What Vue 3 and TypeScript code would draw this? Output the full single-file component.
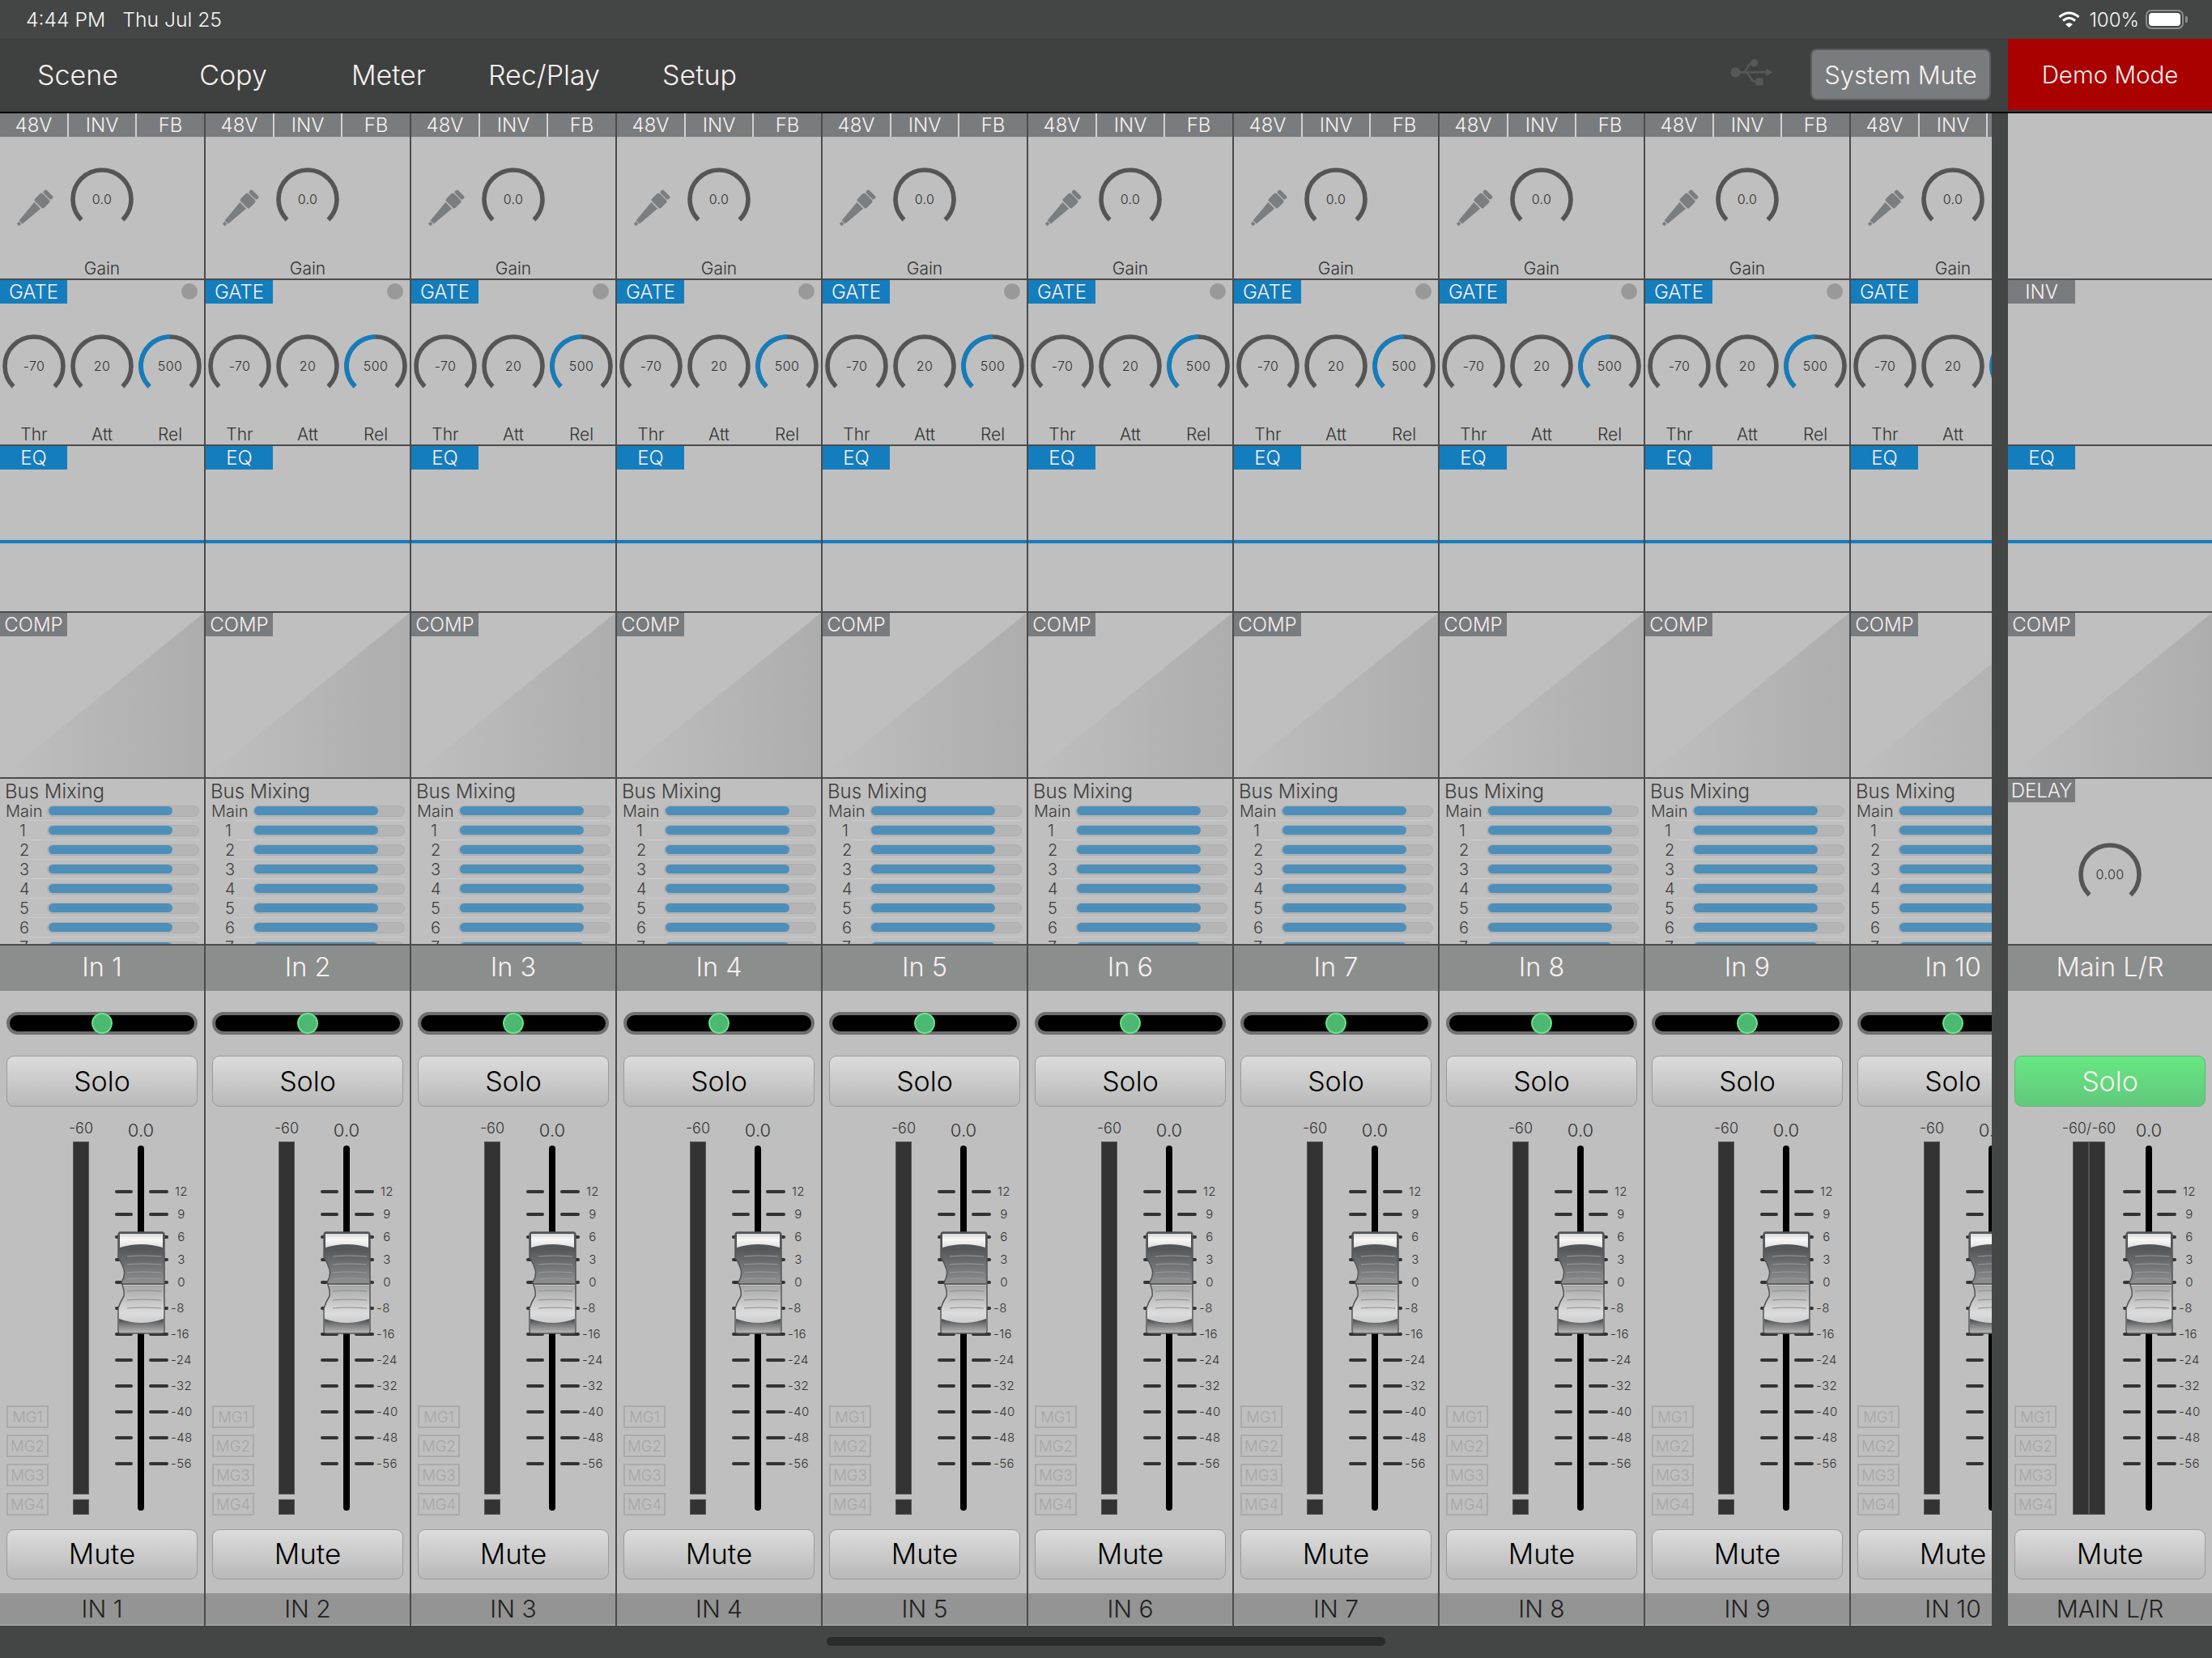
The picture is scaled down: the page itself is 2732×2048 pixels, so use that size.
<script setup lang="ts">
interface Channel {
  name: string
  label: string
  main: boolean
}
interface Group {
  cls: string
  channels: Channel[]
}
interface Knob {
  value: string
  label: string
  blue: boolean
}

const groups: Group[] = [
  {
    cls: 'inputs',
    channels: Array.from({ length: 10 }, (_, i) => ({
      name: `In ${i + 1}`,
      label: `IN ${i + 1}`,
      main: false,
    })),
  },
  { cls: 'master', channels: [{ name: 'Main L/R', label: 'MAIN L/R', main: true }] },
]

const navItems = ['Scene', 'Copy', 'Meter', 'Rec/Play', 'Setup']
const toggles = ['48V', 'INV', 'FB']
const gateKnobs: Knob[] = [
  { value: '-70', label: 'Thr', blue: false },
  { value: '20', label: 'Att', blue: false },
  { value: '500', label: 'Rel', blue: true },
]
const busRows = ['Main', '1', '2', '3', '4', '5', '6', '7']
const groupsMg = ['MG1', 'MG2', 'MG3', 'MG4']

const ticks: { text: string; y: number }[] = [
  { text: '12', y: 57 },
  { text: '9', y: 85.1 },
  { text: '6', y: 113.2 },
  { text: '3', y: 141.3 },
  { text: '0', y: 169.4 },
  { text: '-8', y: 201.2 },
  { text: '-16', y: 233 },
  { text: '-24', y: 265.3 },
  { text: '-32', y: 297.1 },
  { text: '-40', y: 329.3 },
  { text: '-48', y: 361.1 },
  { text: '-56', y: 393.4 },
]
const ridges = [30, 40, 50, 58, 73, 84, 94]
</script>

<template>
  <div class="app">
    <svg class="defs" width="0" height="0" aria-hidden="true">
      <defs>
        <linearGradient id="capBody" x1="0" y1="0" x2="0" y2="1">
          <stop offset="0" stop-color="#4f5255" />
          <stop offset="0.17" stop-color="#55585b" />
          <stop offset="0.5" stop-color="#8d8e8f" />
          <stop offset="0.515" stop-color="#a5a5a5" />
          <stop offset="0.8" stop-color="#dcdcdc" />
          <stop offset="1" stop-color="#bdbdbd" />
        </linearGradient>
        <linearGradient id="capTop" x1="0" y1="0" x2="0" y2="1">
          <stop offset="0" stop-color="#d6d6d6" />
          <stop offset="0.4" stop-color="#f8f8f8" />
          <stop offset="1" stop-color="#dedede" />
        </linearGradient>
        <linearGradient id="capLow" x1="0" y1="0" x2="0" y2="1">
          <stop offset="0" stop-color="#464849" />
          <stop offset="0.45" stop-color="#7c7e7f" />
          <stop offset="1" stop-color="#b4b4b4" />
        </linearGradient>
      </defs>
    </svg>

    <header class="status">
      <div class="status-left">
        <span>4:44 PM</span>
        <span>Thu Jul 25</span>
      </div>
      <div class="status-right">
        <svg class="wifi" viewBox="0 0 27 20" width="27" height="20">
          <path d="M1.5 7 Q13.5 -3 25.5 7" fill="none" stroke="#fff" stroke-width="3" />
          <path d="M6 11.5 Q13.5 5 21 11.5" fill="none" stroke="#fff" stroke-width="3" />
          <path d="M9 16 L13.5 20 L18 16 Q13.5 12.5 9 16 Z" fill="#fff" />
        </svg>
        <span class="pct">100%</span>
        <div class="battery"><div class="battery-fill"></div></div>
        <div class="battery-nub"></div>
      </div>
    </header>

    <nav class="toolbar">
      <div class="nav-item" v-for="item in navItems" :key="item">{{ item }}</div>
      <svg class="usb" viewBox="0 0 60 40" width="60" height="40">
        <g fill="#565857" stroke="none">
          <circle cx="8.5" cy="20.3" r="6.2" />
          <circle cx="31.7" cy="8.7" r="4.6" />
          <rect x="33.5" y="27.5" width="9" height="9" />
          <path d="M54.5 20.3 L46 15.5 V25 Z" />
        </g>
        <path
          d="M8.5 20.3 H47 M16 20.3 H18 Q21 20 24 13 Q25.5 9 31 8.7 M20 20.3 Q24 21 27 27 Q29 32 35 32"
          fill="none"
          stroke="#565857"
          stroke-width="2.4"
        />
      </svg>
      <button class="sys-mute">System Mute</button>
      <div class="demo">Demo Mode</div>
    </nav>

    <main class="board">
      <div v-for="group in groups" :key="group.cls" :class="group.cls">
        <section v-for="ch in group.channels" :key="ch.name" class="channel">
          <!-- input toggles and gain -->
          <div class="sec gain">
            <template v-if="!ch.main">
              <div class="toggles">
                <div class="tag-cell" v-for="t in toggles" :key="t">{{ t }}</div>
              </div>
              <div class="knob-row gain-row">
                <div class="knob-col">
                  <svg class="mic" viewBox="0 0 44 44" width="44" height="44">
                    <g transform="rotate(45 22 22)" fill="#7b7e80">
                      <rect x="15" y="-5.5" width="14" height="5.5" rx="2.2" />
                      <rect x="14" y="1" width="16" height="13.5" rx="2.5" />
                      <path d="M16.5 16 H27.5 L25 45 H19 Z" />
                      <rect x="20" y="46" width="4" height="4" />
                    </g>
                  </svg>
                </div>
                <div class="knob-col">
                  <svg class="knob" viewBox="0 0 84 84" width="84" height="84">
                    <path class="arc" d="M16.54 67.46 A36 36 0 1 1 67.46 67.46" />
                    <text x="42" y="47.5" class="knob-text">0.0</text>
                  </svg>
                  <div class="knob-label gain-label">Gain</div>
                </div>
              </div>
            </template>
          </div>

          <!-- gate -->
          <div class="sec gate">
            <template v-if="!ch.main">
              <div class="tag blue">GATE</div>
              <div class="gate-dot"></div>
              <div class="knob-row gate-row">
                <div class="knob-col" v-for="k in gateKnobs" :key="k.label">
                  <svg class="knob" viewBox="0 0 84 84" width="84" height="84">
                    <path class="arc" d="M16.54 67.46 A36 36 0 1 1 67.46 67.46" />
                    <path v-if="k.blue" class="arc arc-blue" d="M16.54 67.46 A36 36 0 0 1 42 6" />
                    <text x="42" y="47.5" class="knob-text">{{ k.value }}</text>
                  </svg>
                  <div class="knob-label gate-label">{{ k.label }}</div>
                </div>
              </div>
            </template>
            <div v-else class="tag grey">INV</div>
          </div>

          <!-- eq -->
          <div class="sec eq">
            <div class="tag blue">EQ</div>
            <div class="eq-line"></div>
          </div>

          <!-- comp -->
          <div class="sec comp">
            <div class="comp-curve"></div>
            <div class="tag grey comp-tag">COMP</div>
          </div>

          <!-- bus mixing / delay -->
          <div class="sec bus">
            <template v-if="!ch.main">
              <div class="bus-title">Bus Mixing</div>
              <div v-for="r in busRows" :key="r" class="bus-row">
                <span class="bus-name" :class="{ 'bus-main': r === 'Main' }">{{ r }}</span>
                <div class="bus-track"><div class="bus-fill"></div></div>
              </div>
            </template>
            <template v-else>
              <div class="tag grey">DELAY</div>
              <div class="delay-knob">
                <svg class="knob" viewBox="0 0 84 84" width="84" height="84">
                  <path class="arc" d="M16.54 67.46 A36 36 0 1 1 67.46 67.46" />
                  <text x="42" y="47.5" class="knob-text">0.00</text>
                </svg>
              </div>
            </template>
          </div>

          <div class="name">{{ ch.name }}</div>

          <div class="controls">
            <div class="pan" :class="{ 'pan-empty': ch.main }">
              <div v-if="!ch.main" class="pan-knob"></div>
            </div>
            <button class="btn solo" :class="{ 'solo-on': ch.main }">Solo</button>

            <div class="strip">
              <div class="mg-col">
                <div class="mg" v-for="m in groupsMg" :key="m">{{ m }}</div>
              </div>
              <div class="meter-col">
                <div class="meter-label">{{ ch.main ? '-60/-60' : '-60' }}</div>
                <div class="meters">
                  <div class="meter" v-for="n in ch.main ? 2 : 1" :key="n">
                    <div class="meter-top"></div>
                    <div v-if="!ch.main" class="meter-low"></div>
                  </div>
                </div>
              </div>
              <div class="fader-col">
                <div class="fader-value">0.0</div>
                <div class="fader">
                  <div class="track"></div>
                  <div
                    v-for="t in ticks"
                    :key="t.text"
                    class="tick"
                    :style="{ top: t.y - 12 + 'px' }"
                  >
                    <i class="dash dash-l"></i>
                    <i class="dash dash-r"></i>
                    <span class="tick-text" :class="{ neg: t.text.startsWith('-') }">{{ t.text }}</span>
                  </div>
                  <svg class="cap" viewBox="0 0 59 127" width="59" height="127">
                    <path
                      d="M4 1 H55 Q58 1 58 5 V122 Q58 126 55 126 H4 Q1 126 1 122 V95 Q3 88 8 80 Q9 74 6 66 L5 63 Q10 55 8 47 Q6 40 1 32 V5 Q1 1 4 1 Z"
                      fill="url(#capBody)"
                      stroke="#555"
                      stroke-width="1.5"
                    />
                    <path d="M3 3 H56 V20 Q29.5 12 3 20 Z" fill="url(#capTop)" />
                    <path
                      v-for="y in ridges"
                      :key="y"
                      :d="`M12 ${y + 1} Q29.5 ${y - 1} 54 ${y + 1}`"
                      fill="none"
                      :stroke="y > 62 ? '#8b8c8d' : '#9a9b9c'"
                      stroke-width="1"
                    />
                    <path d="M6 65 H57" stroke="#4b4c4d" stroke-width="1.6" />
                    <path d="M7 66.5 H57" stroke="#d0d0d0" stroke-width="0.8" />
                    <path d="M2 108 Q29.5 118 57 108 V125 H2 Z" fill="url(#capLow)" />
                  </svg>
                </div>
              </div>
            </div>

            <button class="btn mute">Mute</button>
          </div>

          <div class="ch-label">{{ ch.label }}</div>
        </section>
      </div>
    </main>

    <footer class="home">
      <div class="home-bar"></div>
    </footer>
  </div>
</template>

<style>
html,
body {
  margin: 0;
  background: #444645;
}
</style>

<style scoped>
.app {
  width: 2732px;
  height: 2048px;
  overflow: hidden;
  display: flex;
  flex-direction: column;
  background: #444645;
  font-family: Inter, 'Liberation Sans', sans-serif;
  color: #333;
}
.defs {
  position: absolute;
}

/* status bar */
.status {
  height: 48px;
  flex: none;
  display: flex;
  justify-content: space-between;
  align-items: center;
  padding: 0 30px 0 32px;
  color: #f6f6f6;
  font-size: 24.7px;
  font-weight: 300;
  box-sizing: border-box;
}
.status-left {
  display: flex;
  gap: 21px;
}
.status-right {
  display: flex;
  align-items: center;
}
.wifi {
  margin-right: 11px;
}
.pct {
  margin-right: 8px;
  font-size: 24px;
}
.battery {
  width: 47px;
  height: 24px;
  box-sizing: border-box;
  border: 2px solid #8a8c8b;
  border-radius: 7px;
  padding: 2px;
}
.battery-fill {
  height: 100%;
  background: #fff;
  border-radius: 4px;
}
.battery-nub {
  width: 3px;
  height: 8px;
  margin-left: 2px;
  background: #8a8c8b;
  border-radius: 0 2px 2px 0;
}

/* toolbar */
.toolbar {
  height: 92px;
  flex: none;
  box-sizing: border-box;
  display: flex;
  align-items: flex-start;
  background: #3f4140;
  border-bottom: 2px solid #000;
  color: #f8f0f0;
}
.nav-item {
  width: 192px;
  height: 88px;
  display: flex;
  align-items: center;
  justify-content: center;
  font-size: 34px;
  font-weight: 300;
}
.usb {
  margin-left: auto;
  margin-top: 21px;
  margin-right: 41px;
}
.sys-mute {
  width: 223px;
  height: 64px;
  margin-top: 12px;
  box-sizing: border-box;
  background: #797c7e;
  border: 2px solid #5a5c5d;
  border-radius: 8px;
  color: #f8f0f0;
  font-family: inherit;
  font-size: 31px;
  font-weight: 300;
  padding: 0;
}
.demo {
  width: 252px;
  height: 88px;
  margin-left: 21px;
  background: #a90000;
  display: flex;
  align-items: center;
  justify-content: center;
  font-size: 29.5px;
  font-weight: 300;
}

/* board */
.board {
  height: 1868px;
  flex: none;
  display: flex;
}
.inputs {
  width: 2460px;
  overflow: hidden;
  display: flex;
  flex: none;
}
.master {
  margin-left: 20px;
  width: 252px;
  flex: none;
  display: flex;
}
.channel {
  width: 254px;
  flex: none;
  box-sizing: border-box;
  border-right: 2px solid #4b4b4b;
  display: flex;
  flex-direction: column;
  background: #bfbfbf;
}
.master .channel {
  width: 252px;
  border-right: 0;
}
.sec {
  flex: none;
  box-sizing: border-box;
  border-bottom: 2px solid #4b4b4b;
  position: relative;
  overflow: hidden;
}
.gain {
  height: 206px;
}
.gate {
  height: 205px;
}
.eq {
  height: 206px;
}
.comp {
  height: 205px;
}
.bus {
  height: 206px;
}

.toggles {
  display: grid;
  grid-template-columns: 83px 82px 83px;
  column-gap: 2px;
  height: 29px;
  background: #d2d0d0;
}
.tag-cell {
  background: #797c7e;
  color: #f8f0f0;
  font-size: 24px;
  font-weight: 300;
  line-height: 29px;
  text-align: center;
}
.tag {
  width: 83px;
  height: 29px;
  line-height: 29px;
  text-align: center;
  font-size: 24px;
  font-weight: 300;
  color: #f8f0f0;
}
.blue {
  background: #147dbd;
}
.grey {
  background: #797c7e;
}
.gate-dot {
  position: absolute;
  top: 4px;
  right: 8px;
  width: 20px;
  height: 20px;
  border-radius: 50%;
  background: #999;
}

.knob-row {
  display: grid;
  grid-template-columns: repeat(3, 84px);
}
.knob-col {
  display: flex;
  flex-direction: column;
  align-items: center;
}
.gain-row {
  padding-top: 35px;
}
.gate-row {
  padding-top: 35px;
}
.mic {
  margin-top: 32px;
  overflow: visible;
}
.knob {
  display: block;
  overflow: visible;
}
.arc {
  fill: none;
  stroke: #555;
  stroke-width: 5.6;
}
.arc-blue {
  stroke: #147dbd;
}
.knob-text {
  font-family: Inter, 'Liberation Sans', sans-serif;
  font-size: 16px;
  font-weight: 300;
  fill: #2e2e2e;
  text-anchor: middle;
  letter-spacing: 0.4px;
}
.knob-label {
  font-size: 21px;
  line-height: 24px;
  color: #333;
  font-weight: 300;
}
.gain-label {
  margin-top: 32px;
}
.gate-label {
  margin-top: 31px;
}

.eq-line {
  margin-top: 87px;
  height: 3.5px;
  background: #147dbd;
  border-bottom: 1px solid #9fb9cb;
}
.comp-curve {
  position: absolute;
  inset: 0;
  background: linear-gradient(90deg, #bfbfbf, #adadad);
  clip-path: polygon(0 100%, 100% 0, 100% 100%);
}
.comp-tag {
  position: relative;
}

.bus-title {
  height: 28px;
  box-sizing: border-box;
  padding: 2px 0 0 6px;
  font-size: 24px;
  line-height: 28px;
  font-weight: 300;
  color: #3d3d3d;
}
.bus-row {
  height: 24px;
  display: flex;
  align-items: center;
  background: linear-gradient(#cbcbcb, #cbcbcb) no-repeat 36px 100% / 210px 1px;
}
.bus-name {
  width: 58px;
  flex: none;
  box-sizing: border-box;
  padding-left: 24px;
  font-size: 20px;
  font-weight: 300;
  color: #3d3d3d;
  text-align: left;
}
.bus-main {
  padding-left: 7px;
}
.bus-track {
  width: 188px;
  height: 14px;
  box-sizing: border-box;
  border: 1.5px solid #a9aeb2;
  border-radius: 7px;
  background: #b5b5b5;
  padding-left: 1px;
  display: flex;
}
.bus-fill {
  width: 153px;
  height: 11px;
  border-radius: 5.5px;
  background: #4e8fba;
}
.delay-knob {
  margin: 47px 0 0 84px;
}

.name {
  height: 56px;
  flex: none;
  background: #8a8e8d;
  color: #f8f0f0;
  font-size: 32.5px;
  font-weight: 300;
  line-height: 54px;
  text-align: center;
}

.controls {
  height: 744px;
  flex: none;
  box-sizing: border-box;
  display: flex;
  flex-direction: column;
  padding: 26px 8px 0;
}
.pan {
  height: 28px;
  flex: none;
  box-sizing: border-box;
  border: 4px solid #6f6f6f;
  border-radius: 14px;
  background: #000;
  display: flex;
  align-items: center;
  justify-content: center;
}
.pan-empty {
  background: transparent;
  border-color: transparent;
}
.pan-knob {
  width: 26px;
  height: 26px;
  flex: none;
  box-sizing: border-box;
  border-radius: 50%;
  background: #4db872;
  border: 2px solid #66e88a;
}
.btn {
  flex: none;
  width: 236px;
  padding: 0;
  box-sizing: border-box;
  border: 1.5px solid #9a9a9a;
  border-radius: 9px;
  background: linear-gradient(#dcdcdc, #b9b9b9);
  color: #000;
  font-family: inherit;
  font-weight: 300;
}
.solo {
  height: 63px;
  margin-top: 26px;
  font-size: 34px;
}
.solo-on {
  background: linear-gradient(#66e882, #62c87d);
  border-color: #5cb874;
  color: #f8f0f0;
}
.mute {
  height: 62px;
  padding-bottom: 2px;
  font-size: 35px;
}

.strip {
  height: 522px;
  flex: none;
  margin: 0 -8px;
  display: grid;
  grid-template-columns: 60px 80px 112px;
}
.mg-col {
  padding: 369px 0 0 8px;
  display: flex;
  flex-direction: column;
  gap: 8px;
}
.mg {
  width: 52px;
  height: 28px;
  box-sizing: border-box;
  border: 2px solid #aaa;
  color: #a6a6a6;
  font-size: 18.5px;
  line-height: 24px;
  text-align: center;
  font-weight: 300;
  overflow: hidden;
}
.meter-col {
  display: flex;
  flex-direction: column;
  align-items: center;
}
.meter-label {
  margin-top: 15px;
  height: 24px;
  line-height: 24px;
  font-size: 18px;
  font-weight: 300;
  color: #333;
  white-space: nowrap;
  margin-bottom: 4px;
}
.meters {
  display: flex;
}
.meter {
  width: 20px;
  height: 461px;
  display: flex;
  flex-direction: column;
  gap: 6.5px;
}
.meter-top {
  flex: 1;
  box-sizing: border-box;
  background: #333;
  border: 1px solid #555;
}
.meter-low {
  flex: none;
  height: 19px;
  background: #333;
  box-sizing: border-box;
  border: 1px solid #555;
}
.fader-col {
  display: flex;
  flex-direction: column;
}
.fader-value {
  margin-top: 17px;
  width: 68px;
  height: 24px;
  line-height: 24px;
  text-align: center;
  font-size: 22px;
  font-weight: 300;
  color: #333;
}
.fader {
  position: relative;
  margin-top: 6.5px;
  height: 451.5px;
}
.track {
  position: absolute;
  left: 30px;
  top: 0;
  width: 8px;
  height: 100%;
  border-radius: 4px;
  background: #000;
}
.tick {
  position: absolute;
  left: 0;
  width: 112px;
  height: 24px;
}
.dash {
  position: absolute;
  top: 10px;
  height: 4px;
  background: #333;
  border-radius: 2px;
}
.dash-l {
  left: 2px;
  width: 22px;
}
.dash-r {
  left: 44px;
  width: 24px;
}
.tick-text {
  position: absolute;
  left: 72px;
  width: 24px;
  top: 0;
  line-height: 24px;
  font-size: 15px;
  font-weight: 300;
  color: #333;
  text-align: center;
  letter-spacing: 0.4px;
}
.neg {
  left: 71px;
  text-align: left;
  white-space: nowrap;
}
.cap {
  position: absolute;
  left: 4.5px;
  top: 106px;
  display: block;
}

.ch-label {
  height: 39px;
  flex: none;
  background: #949494;
  color: #222;
  font-size: 30px;
  font-weight: 300;
  line-height: 39px;
  text-align: center;
}

.home {
  height: 41px;
  flex: none;
  padding-top: 14px;
  box-sizing: border-box;
  display: flex;
  justify-content: center;
}
.home-bar {
  width: 690px;
  height: 11px;
  border-radius: 5.5px;
  background: #2b2b2b;
}
</style>
